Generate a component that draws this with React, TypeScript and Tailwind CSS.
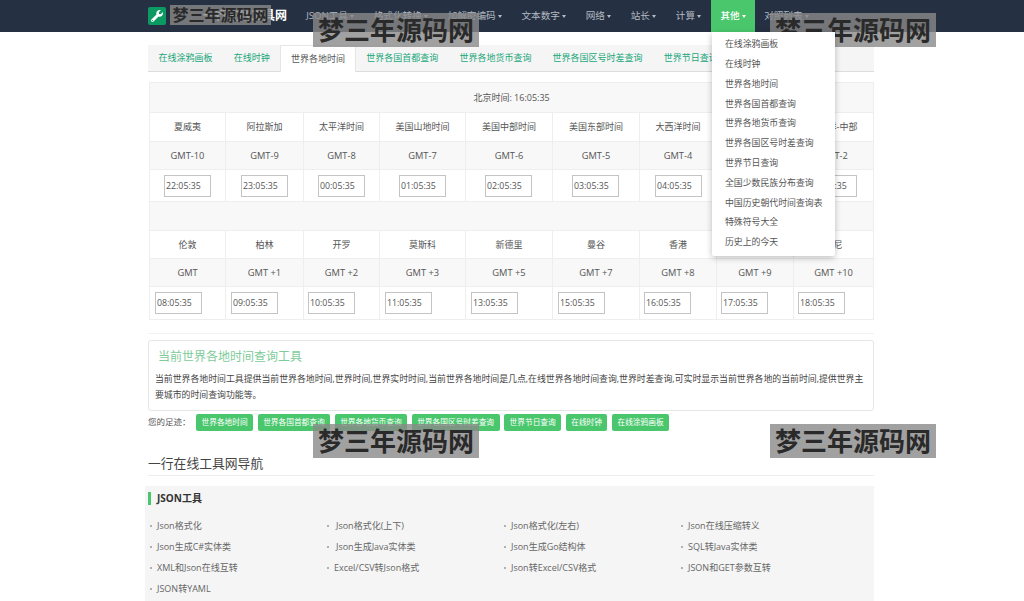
import { FaWrench } from "react-icons/fa";

const navItems = ["JSON工具", "格式化转换", "加解密编码", "文本数字", "网络", "站长", "计算"];
const menuItems = [
    "在线涂鸦画板",
    "在线时钟",
    "世界各地时间",
    "世界各国首都查询",
    "世界各地货币查询",
    "世界各国区号时差查询",
    "世界节日查询",
    "全国少数民族分布查询",
    "中国历史朝代时间查询表",
    "特殊符号大全",
    "历史上的今天",
];
const tabs = ["在线涂鸦画板", "在线时钟", "世界各地时间", "世界各国首都查询", "世界各地货币查询", "世界各国区号时差查询", "世界节日查询"];
const history = ["世界各地时间", "世界各国首都查询", "世界各地货币查询", "世界各国区号时差查询", "世界节日查询", "在线时钟", "在线涂鸦画板"];

const colWidths = ["w-[76px]", "w-[78px]", "w-[76px]", "w-[86px]", "w-[87px]", "w-[87px]", "w-[77px]", "w-[77px]", "w-[80px]"];

const rowOne = [
    { city: "夏威夷", gmt: "GMT-10", time: "22:05:35", pad: "pl-[14px]" },
    { city: "阿拉斯加", gmt: "GMT-9", time: "23:05:35", pad: "pl-[15px]" },
    { city: "太平洋时间", gmt: "GMT-8", time: "00:05:35", pad: "pl-[14px]" },
    { city: "美国山地时间", gmt: "GMT-7", time: "01:05:35", pad: "pl-[19px]" },
    { city: "美国中部时间", gmt: "GMT-6", time: "02:05:35", pad: "pl-[19px]" },
    { city: "美国东部时间", gmt: "GMT-5", time: "03:05:35", pad: "pl-[19px]" },
    { city: "大西洋时间", gmt: "GMT-4", time: "04:05:35", pad: "pl-[15px]" },
    { city: "巴西利亚", gmt: "GMT-3", time: "05:05:35", pad: "pl-[15px]" },
    { city: "大西洋-中部", gmt: "GMT-2", time: "06:05:35", pad: "pl-[16px]" },
];
const rowTwo = [
    { city: "伦敦", gmt: "GMT", time: "08:05:35", pad: "pl-[5px]" },
    { city: "柏林", gmt: "GMT +1", time: "09:05:35", pad: "pl-[5px]" },
    { city: "开罗", gmt: "GMT +2", time: "10:05:35", pad: "pl-[4px]" },
    { city: "莫斯科", gmt: "GMT +3", time: "11:05:35", pad: "pl-[5px]" },
    { city: "新德里", gmt: "GMT +5", time: "13:05:35", pad: "pl-[5px]" },
    { city: "曼谷", gmt: "GMT +7", time: "15:05:35", pad: "pl-[5px]" },
    { city: "香港", gmt: "GMT +8", time: "16:05:35", pad: "pl-[4px]" },
    { city: "东京", gmt: "GMT +9", time: "17:05:35", pad: "pl-[4px]" },
    { city: "悉尼", gmt: "GMT +10", time: "18:05:35", pad: "pl-[4px]" },
];

const links = [
    ["Json格式化", "Json格式化(上下)", "Json格式化(左右)", "Json在线压缩转义"],
    ["Json生成C#实体类", "Json生成Java实体类", "Json生成Go结构体", "SQL转Java实体类"],
    ["XML和Json在线互转", "Excel/CSV转Json格式", "Json转Excel/CSV格式", "JSON和GET参数互转"],
    ["JSON转YAML"],
];

const Caret = () => (
    <span className="ml-[2px] inline-block border-x-[2.5px] border-t-[3px] border-x-transparent border-t-current align-middle" />
);

const Watermark = ({ pos, small }: { pos: string; small?: boolean }) => (
    <div
        className={`absolute ${pos} flex items-center justify-center bg-[#8a8a8a]/80 font-bold text-[#2a2a2a] ${
            small ? "h-[20px] w-[101px] text-[16px]" : "h-[34px] w-[166px] text-[26px]"
        }`}
    >
        梦三年源码网
    </div>
);

const TimeRows = ({ rows, top, bottom }: { rows: typeof rowOne; top: string; bottom: string }) => (
    <>
        <tr className={top}>
            {rows.map((r) => (
                <td key={r.city} className="border border-[#eeeeee] text-center text-[9px]">
                    {r.city}
                </td>
            ))}
        </tr>
        <tr className="h-[28px] bg-[#f8f8f8]">
            {rows.map((r) => (
                <td key={r.gmt} className="border border-[#eeeeee] text-center text-[9.3px]">
                    {r.gmt}
                </td>
            ))}
        </tr>
        <tr className={bottom}>
            {rows.map((r) => (
                <td key={r.time} className={`border border-[#eeeeee] ${r.pad}`}>
                    <input
                        readOnly
                        value={r.time}
                        className="block h-[22px] w-[47px] border border-[#c4c4c4] bg-white pl-[1px] text-[8.8px] text-[#555555]"
                    />
                </td>
            ))}
        </tr>
    </>
);

export default function App() {
    return (
        <div className="relative h-[601px] w-[1024px] overflow-hidden bg-white font-['Open_Sans','Noto_Sans_CJK_SC',sans-serif] text-[#555555]">
            <header className="h-[32px] bg-[#253142]">
                <div className="relative ml-[148px] flex h-full w-[726px] items-center">
                    <span className="flex h-[18px] w-[18px] items-center justify-center rounded-[2px] bg-[#0b9a62] text-white">
                        <FaWrench size={12} />
                    </span>
                    <span className="w-[121px] text-right text-[12px] font-bold whitespace-nowrap text-white">一行在线工具网</span>
                    <nav className="ml-[9.25px] flex h-full items-center text-[9.6px] text-[#b4bac2]">
                        {navItems.map((item) => (
                            <span key={item} className="px-[9.95px] whitespace-nowrap">
                                {item}
                                <Caret />
                            </span>
                        ))}
                        <div className="relative h-full">
                            <span className="flex h-full items-center bg-[#4ac76d] px-[9.5px] font-medium whitespace-nowrap text-white">
                                其他
                                <Caret />
                            </span>
                            <ul className="absolute top-[32px] left-[1px] z-10 h-[224px] w-[123px] rounded-b-[2px] bg-white pt-[2px] text-[8.9px] text-[#555555] shadow-[0_2px_6px_rgba(0,0,0,0.25)]">
                                {menuItems.map((m) => (
                                    <li key={m} className="flex h-[19.8px] items-center pl-[13px] whitespace-nowrap">
                                        {m}
                                    </li>
                                ))}
                            </ul>
                        </div>
                        <span className="px-[9px] whitespace-nowrap">
                            对照列表
                            <Caret />
                        </span>
                    </nav>
                </div>
            </header>

            <main className="ml-[148px] w-[726px]">
                <div className="mt-[13px] flex h-[27px] border-b border-[#dddddd] bg-[#f5f5f5] text-[9px] text-[#20a779]">
                    {tabs.map((t, i) => (
                        <span
                            key={t}
                            className={`flex items-center whitespace-nowrap ${
                                i === 2 ? "-mb-px border-x border-t border-[#e5e5e5] bg-white px-[9.6px] text-[#555555]" : "px-[10.6px]"
                            }`}
                        >
                            {t}
                        </span>
                    ))}
                </div>

                <table className="mt-[10px] ml-[1px] w-[724px] table-fixed border-collapse">
                    <colgroup>
                        {colWidths.map((w, i) => (
                            <col key={i} className={w} />
                        ))}
                    </colgroup>
                    <tbody>
                        <tr className="h-[30px] bg-[#f8f8f8]">
                            <td colSpan={9} className="border border-[#eeeeee] text-center text-[9px]">
                                北京时间: 16:05:35
                            </td>
                        </tr>
                        <TimeRows rows={rowOne} top="h-[29px]" bottom="h-[32px]" />
                        <tr className="h-[29px] bg-[#f8f8f8]">
                            <td colSpan={9} className="border border-[#eeeeee]" />
                        </tr>
                        <TimeRows rows={rowTwo} top="h-[28px]" bottom="h-[33px]" />
                    </tbody>
                </table>

                <div className="mt-[13px] h-px bg-[#f2f2f2]" />

                <section className="mt-[6px] h-[71px] rounded-[3px] border border-[#e6e6e6] px-[6px]">
                    <h2 className="mt-[7px] pl-[3px] text-[12px] leading-[17px] text-[#7fcb9b]">当前世界各地时间查询工具</h2>
                    <p className="mt-[7px] text-[8.88px] leading-[15.5px] text-[#444444]">
                        当前世界各地时间工具提供当前世界各地时间,世界时间,世界实时时间,当前世界各地时间是几点,在线世界各地时间查询,世界时差查询,可实时显示当前世界各地的当前时间,提供世界主要城市的时间查询功能等。
                    </p>
                </section>

                <div className="mt-[3px] flex h-[17px] items-center text-[8.5px]">
                    <span className="w-[48px]">您的足迹：</span>
                    <div className="flex gap-[4.5px]">
                        {history.map((h) => (
                            <span key={h} className="flex h-[17px] items-center rounded-[2px] bg-[#4ac76d] px-[5.5px] text-[7.7px] whitespace-nowrap text-white">
                                {h}
                            </span>
                        ))}
                    </div>
                </div>

                <h3 className="mt-[23px] text-[12.8px] leading-[18px] text-[#444444]">一行在线工具网导航</h3>
                <div className="mt-[3px] h-px bg-[#eeeeee]" />

                <section className="mt-[10px] -ml-[3px] h-[115px] w-[729px] bg-[#f5f5f5] pl-[3px]">
                    <div className="flex items-center pt-[6px]">
                        <span className="h-[13px] w-[3px] bg-[#4ac76d]" />
                        <h4 className="ml-[6px] text-[10px] leading-[13px] font-bold text-[#333333]">JSON工具</h4>
                    </div>
                    <div className="mt-[10px] text-[9px] text-[#666666]">
                        {links.map((row) => (
                            <div key={row[0]} className="grid h-[21px] grid-cols-[177px_177px_177px_177px] items-center">
                                {row.map((l, i) => (
                                    <span key={l} className="flex items-center pl-[2px] whitespace-nowrap">
                                        <span className="h-[2px] w-[2px] rounded-full bg-[#999999]" />
                                        <span className={i === 1 && !l.startsWith("Excel") ? "ml-[7px]" : "ml-[5px]"}>{l}</span>
                                    </span>
                                ))}
                            </div>
                        ))}
                    </div>
                </section>
            </main>

            <Watermark pos="top-[5px] left-[170px]" small />
            <Watermark pos="top-[13px] left-[313px]" />
            <Watermark pos="top-[13px] left-[770px]" />
            <Watermark pos="top-[424px] left-[313px]" />
            <Watermark pos="top-[424px] left-[770px]" />
        </div>
    );
}
